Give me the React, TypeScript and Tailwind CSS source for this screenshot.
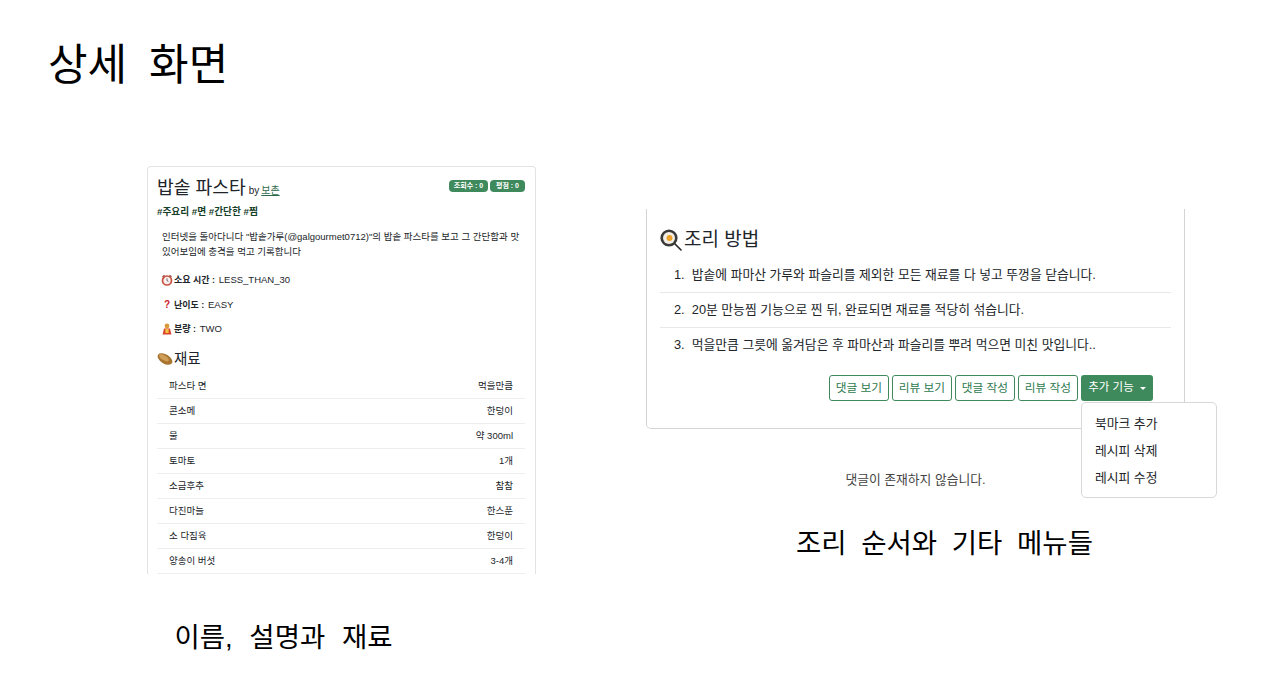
const ingredients = [
  ["파스타 면", "먹을만큼"],
  ["콘소메", "한덩이"],
  ["물", "약 300ml"],
  ["토마토", "1개"],
  ["소금후추", "참참"],
  ["다진마늘", "한스푼"],
  ["소 다짐육", "한덩이"],
  ["양송이 버섯", "3-4개"],
]

const steps = [
  "1.  밥솥에 파마산 가루와 파슬리를 제외한 모든 재료를 다 넣고 뚜껑을 닫습니다.",
  "2.  20분 만능찜 기능으로 찐 뒤, 완료되면 재료를 적당히 섞습니다.",
  "3.  먹을만큼 그릇에 옮겨담은 후 파마산과 파슬리를 뿌려 먹으면 미친 맛입니다..",
]

function ClockIcon() {
  return (
    <svg width="12" height="12" viewBox="0 0 12 12">
      <path d="M1.5 3l2-1.8M10.5 3l-2-1.8" stroke="#8a4a3a" strokeWidth="1.2" />
      <circle cx="6" cy="6.5" r="4.5" fill="#fbeeee" stroke="#c8503f" strokeWidth="1.7" />
      <path d="M6 4.4v2.2l1.4.8" stroke="#444" strokeWidth="0.8" fill="none" />
    </svg>
  )
}

function PersonIcon() {
  return (
    <svg width="12" height="12" viewBox="0 0 12 12">
      <circle cx="6" cy="3" r="2.4" fill="#d99a3c" />
      <path d="M1.6 11.5L3 5.4h6l1.4 6.1z" fill="#d9442b" />
      <rect x="4.4" y="6" width="3.2" height="4" fill="#f4c542" />
    </svg>
  )
}

function PotatoIcon() {
  return (
    <svg width="16" height="16" viewBox="0 0 16 16">
      <ellipse cx="8" cy="8" rx="8.2" ry="4.6" transform="rotate(32 8 8)" fill="#a8742f" />
      <ellipse cx="7" cy="6.8" rx="5.6" ry="2.4" transform="rotate(32 7 6.8)" fill="#cf9f5a" />
    </svg>
  )
}

function PanIcon() {
  return (
    <svg width="22" height="22" viewBox="0 0 22 22">
      <path d="M14 14l7 7" stroke="#222" strokeWidth="1.6" strokeLinecap="round" />
      <circle cx="9" cy="9" r="8.6" fill="#3a3a3a" />
      <circle cx="9" cy="9" r="6" fill="#f3efe6" />
      <circle cx="9.5" cy="9" r="3" fill="#eda32b" />
    </svg>
  )
}

function DetailCard() {
  return (
    <div className="w-[389px] h-[408px] overflow-hidden rounded-t-[4px] border border-b-0 border-[#e3e3e3] pl-[9px] pr-[10px] pt-[9px] text-[#212529]">
      <div className="flex justify-between items-start">
        <div className="flex items-baseline">
          <span className="text-[18.2px] leading-[24px]">밥솥 파스타</span>
          <span className="ml-[3px] text-[10px]">by</span>
          <span className="ml-[2px] text-[10px] text-[#2e6b4a] underline">보촌</span>
        </div>
        <div className="flex gap-[2px] mt-[4px]">
          <span className="rounded-[4px] bg-[#3f8a5c] w-[39px] text-center h-[12px] text-[7px] leading-[12px] font-bold text-white">조회수 : 0</span>
          <span className="rounded-[4px] bg-[#3f8a5c] w-[35px] text-center h-[12px] text-[7px] leading-[12px] font-bold text-white">평점 : 0</span>
        </div>
      </div>
      <div className="mt-[5px] text-[9.7px] leading-[14px] font-bold text-[#16402a]">#주요리 #면 #간단한 #찜</div>
      <p className="mt-[10px] pl-[5px] pr-[4px] text-[9.5px] leading-[15px]">
        인터넷을 돌아다니다 "밥솥가루(@galgourmet0712)"의 밥솥 파스타를 보고 그 간단함과 맛있어보임에 충격을 먹고 기록합니다
      </p>
      <div className="mt-[14px] flex flex-col gap-[10.5px] px-[4px] text-[9.5px] leading-[14px]">
        <div className="flex items-center gap-[1px]"><ClockIcon /><b className="text-[9px]">소요 시간 :</b>&nbsp;LESS_THAN_30</div>
        <div className="flex items-center gap-[1px]"><span className="w-[12px] text-center text-[10px] font-bold text-[#d0202a]">?</span><b className="text-[9px]">난이도 :</b>&nbsp;EASY</div>
        <div className="flex items-center gap-[1px]"><PersonIcon /><b className="text-[9px]">분량 :</b>&nbsp;TWO</div>
      </div>
      <div className="mt-[13px] flex items-center gap-[1px] text-[14.5px] leading-[20px]"><PotatoIcon />재료</div>
      <div className="mt-[5px] flex flex-col">
        {ingredients.map(([name, amount]) => (
          <div key={name} className="flex h-[25px] items-center justify-between border-b border-[#eeeeee] px-[12px] text-[9.5px]">
            <span>{name}</span>
            <span>{amount}</span>
          </div>
        ))}
      </div>
    </div>
  )
}

function StepsCard() {
  return (
    <div className="relative w-[539px] h-[220px] rounded-b-[5px] border border-t-0 border-[#d4d4d4] px-[13px] pt-[18px] text-[#212529]">
      <div className="flex items-center gap-[2px] text-[19px] leading-[26px]"><PanIcon />조리 방법</div>
      <div className="mt-[5px] flex flex-col">
        {steps.map((step, i) => (
          <div key={i} className={"h-[35px] pl-[14px] pt-[7px] text-[12.8px] leading-[20px] whitespace-pre " + (i < 2 ? "border-b border-[#e8e8e8]" : "")}>
            {step}
          </div>
        ))}
      </div>
      <div className="mt-[12px] flex justify-end gap-[3px] pr-[18px]">
        {["댓글 보기", "리뷰 보기", "댓글 작성", "리뷰 작성"].map((label) => (
          <button key={label} className="h-[26px] w-[60px] rounded-[3px] border border-[#3f8a5c] text-[11.7px] text-[#2e7a4f]">{label}</button>
        ))}
        <button className="flex h-[26px] w-[72px] items-center justify-center gap-[6px] rounded-[3px] bg-[#3f8a5c] text-[11.5px] text-white">
          추가 기능
          <span className="h-0 w-0 border-x-[3.5px] border-t-[3.5px] border-x-transparent border-t-white" />
        </button>
      </div>
      <div className="absolute left-[434px] top-[193px] z-10 flex h-[96px] w-[136px] flex-col justify-center rounded-[5px] border border-[#d8d8d8] bg-white pl-[13px] text-[12.8px] leading-[27px]">
        <span>북마크 추가</span>
        <span>레시피 삭제</span>
        <span>레시피 수정</span>
      </div>
    </div>
  )
}

export default function App() {
  return (
    <div className="h-[689px] w-[1280px] overflow-hidden bg-white text-black [font-family:'Liberation_Sans','Noto_Sans_CJK_KR',sans-serif]">
      <h1 className="pl-[48px] pt-[39px] text-[43px] leading-[52px] [word-spacing:10px]">상세 화면</h1>
      <div className="mt-[75px] flex items-start pl-[147px]">
        <div className="flex flex-col items-center">
          <DetailCard />
          <div className="mt-[46px] pr-[116px] text-[27.5px] leading-[36px] [word-spacing:9px]">이름, 설명과 재료</div>
        </div>
        <div className="ml-[110px] mt-[43px] flex flex-col items-center">
          <StepsCard />
          <div className="mt-[41px] text-[12.8px] leading-[20px] text-[#444444]">댓글이 존재하지 않습니다.</div>
          <div className="mt-[36px] pl-[58px] text-[27.5px] leading-[36px] [word-spacing:7px]">조리 순서와 기타 메뉴들</div>
        </div>
      </div>
    </div>
  )
}
